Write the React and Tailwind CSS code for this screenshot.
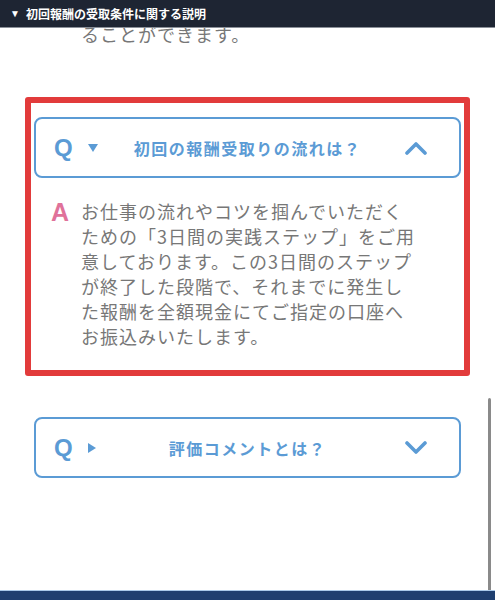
import React from "react";

const jp = { fontFamily: '"Noto Sans CJK JP", "Noto Sans", sans-serif' };
const latin = { fontFamily: '"Liberation Sans", Arial, sans-serif' };

const Chevron = ({ up }) => (
  <svg width="22" height="14" viewBox="0 0 22 14" className="block">
    <polyline
      points={up ? "2,12 11,3 20,12" : "2,2 11,11 20,2"}
      fill="none"
      stroke="#5b9bd5"
      strokeWidth="3.6"
      strokeLinecap="round"
      strokeLinejoin="round"
    />
  </svg>
);

const Triangle = ({ open }) =>
  open ? (
    <svg width="10" height="8" viewBox="0 0 10 8" className="block">
      <polygon points="0,0 10,0 5,8" fill="#5b9bd5" />
    </svg>
  ) : (
    <svg width="8" height="10" viewBox="0 0 8 10" className="block">
      <polygon points="0,0 8,5 0,10" fill="#5b9bd5" />
    </svg>
  );

const Question = ({ text, open }) => (
  <div className="grid grid-cols-[1fr_auto_1fr] items-center h-[61px] border-2 border-[#5b9bd5] rounded-[8px] bg-white">
    <div className="flex items-center pl-[18px]">
      <span style={latin} className="text-[24px] font-bold leading-none text-[#5b9bd5] w-[34px]">
        Q
      </span>
      <Triangle open={open} />
    </div>
    <div style={jp} className="text-[16px] font-bold tracking-[1.5px] text-[#5b9bd5]">
      {text}
    </div>
    <div className="flex justify-end pr-[32px]">
      <Chevron up={open} />
    </div>
  </div>
);

export default function App() {
  return (
    <div className="relative h-[600px] overflow-hidden bg-white">
      <div className="relative z-10 flex items-center h-[28px] pl-[10px] bg-[#1e2533] border-b border-[#8b9099]">
        <span className="text-white text-[10px] mr-[6px]">▼</span>
        <span style={jp} className="text-white text-[12px] font-bold">
          初回報酬の受取条件に関する説明
        </span>
      </div>

      <div style={jp} className="-mt-[6px] pl-[81px] text-[18px] leading-[25px] tracking-[1px] text-[#777]">
        ることができます。
      </div>

      <div className="mt-[50px] mx-[25px] border-[6px] border-[#e23b3b] rounded-[3px] pt-[14px] px-[3px] pb-[21px]">
        <Question text="初回の報酬受取りの流れは？" open />
        <div className="flex pt-[21px] pl-[17px]">
          <span style={latin} className="w-[30px] text-[25px] font-bold leading-[27px] text-[#e0729a]">
            A
          </span>
          <p style={jp} className="w-[338px] text-[18px] leading-[25px] tracking-[1px] text-[#777]">
            お仕事の流れやコツを掴んでいただくための「3日間の実践ステップ」をご用意しております。この3日間のステップが終了した段階で、それまでに発生した報酬を全額現金にてご指定の口座へお振込みいたします。
          </p>
        </div>
      </div>

      <div className="mt-[41px] mx-[34px]">
        <Question text="評価コメントとは？" />
      </div>

      <div className="absolute right-[4px] top-[398px] w-[3px] h-[200px] rounded-full bg-[#8a8a8a]" />
      <div className="absolute bottom-0 left-0 right-0 h-[10px] bg-[#1f3f70] border-t border-[#a9c9ea]" />
    </div>
  );
}
